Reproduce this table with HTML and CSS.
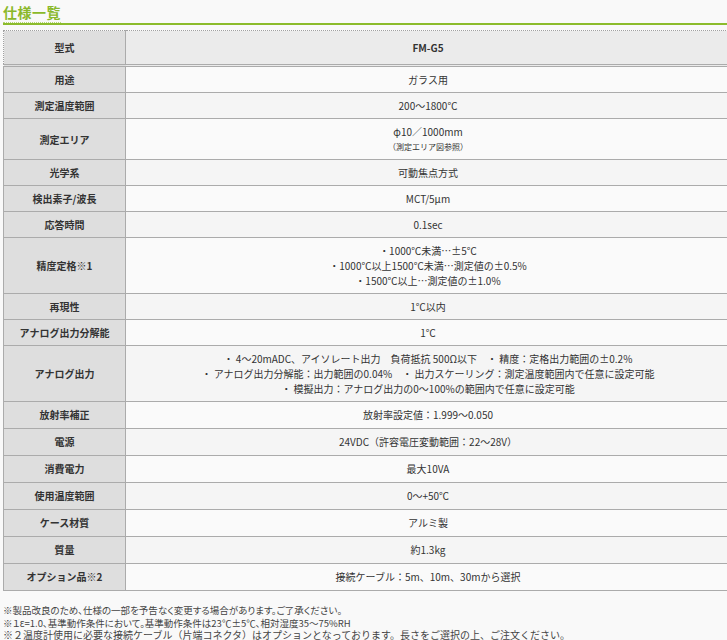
FILE: index.html
```html
<!DOCTYPE html>
<html lang="ja">
<head>
<meta charset="utf-8">
<link rel="stylesheet" href="styles.css">
</head>
<body>
<div class="page">
  <h2 class="heading"><span class="heading-text">仕様一覧</span></h2>
  <table class="spec">
    <thead>
      <tr><th class="label">型式</th><th class="model">FM-G5</th></tr>
    </thead>
    <tbody>
      <tr><th class="label">用途</th><td>ガラス用</td></tr>
      <tr><th class="label">測定温度範囲</th><td>200～1800℃</td></tr>
      <tr><th class="label">測定エリア</th><td>φ10／1000mm<span class="small">（測定エリア図参照）</span></td></tr>
      <tr><th class="label">光学系</th><td>可動焦点方式</td></tr>
      <tr><th class="label">検出素子/波長</th><td>MCT/5μm</td></tr>
      <tr><th class="label">応答時間</th><td>0.1sec</td></tr>
      <tr><th class="label">精度定格※1</th><td>・1000℃未満…±5℃<br>・1000℃以上1500℃未満…測定値の±0.5%<br>・1500℃以上…測定値の±1.0%</td></tr>
      <tr><th class="label">再現性</th><td>1℃以内</td></tr>
      <tr><th class="label">アナログ出力分解能</th><td>1℃</td></tr>
      <tr><th class="label">アナログ出力</th><td>・ 4～20mADC、アイソレート出力　負荷抵抗 500Ω以下　・ 精度：定格出力範囲の±0.2%<br>・ アナログ出力分解能：出力範囲の0.04%　・ 出力スケーリング：測定温度範囲内で任意に設定可能<br>・ 模擬出力：アナログ出力の0～100%の範囲内で任意に設定可能</td></tr>
      <tr><th class="label">放射率補正</th><td>放射率設定値：1.999～0.050</td></tr>
      <tr><th class="label">電源</th><td>24VDC（許容電圧変動範囲：22～28V）</td></tr>
      <tr><th class="label">消費電力</th><td>最大10VA</td></tr>
      <tr><th class="label">使用温度範囲</th><td>0～+50℃</td></tr>
      <tr><th class="label">ケース材質</th><td>アルミ製</td></tr>
      <tr><th class="label">質量</th><td>約1.3kg</td></tr>
      <tr><th class="label">オプション品※2</th><td>接続ケーブル：5m、10m、30mから選択</td></tr>
    </tbody>
  </table>
  <div class="notes">
    <p class="note-narrow">※製品改良のため、仕様の一部を予告なく変更する場合があります。ご了承ください。</p>
    <p class="note-narrow">※１ε=1.0、基準動作条件において。基準動作条件は23℃±5℃、相対湿度35～75%RH</p>
    <p class="note-wide">※２温度計使用に必要な接続ケーブル（片端コネクタ）はオプションとなっております。長さをご選択の上、ご注文ください。</p>
  </div>
</div>
</body>
</html>
```

FILE: styles.css
```css
html, body {
  margin: 0;
  padding: 0;
  background: #f9f9f9;
}
body {
  font-family: "Noto Sans CJK JP", "Noto Sans", sans-serif;
  color: #333;
  overflow: hidden;
}
.page {
  padding: 0 0 0 3px;
  width: 727px;
}
.heading {
  margin: 0;
  padding-top: 3px;
  font-size: 14px;
  line-height: 18px;
  font-weight: bold;
  color: #8ab82a;
  border-bottom: 2px solid #8cbc2c;
}
.heading-text {
  display: inline-block;
  border-bottom: 1px dotted #b6d47a;
  padding-bottom: 1px;
  letter-spacing: 0.5px;
}
.spec {
  margin-top: 5px;
  width: 727px;
  border-collapse: collapse;
  font-size: 10px;
  line-height: 15px;
}
.spec th, .spec td {
  border-top: 1px solid #ababab;
  border-bottom: 1px solid #ababab;
  padding: 5px 4px;
  height: 15px;
  text-align: center;
}
.spec tbody tr:nth-child(n+11) th,
.spec tbody tr:nth-child(n+11) td {
  padding-bottom: 6px;
}
.spec .label {
  width: 113px;
  background: #dedede;
  font-weight: bold;
  border-left: 1px solid #ababab;
  border-right: 1px solid #ababab;
  color: #333;
}
.spec td {
  background: #fafafa;
  font-weight: normal;
}
.spec tbody tr:nth-child(even) td {
  background-color: #f4f4f4;
  background-image: repeating-conic-gradient(#efefef 0 25%, #fafafa 0 50%);
  background-size: 2px 2px;
}
.spec thead th {
  padding: 9px 4px;
  border-top: 1px dotted #a0a0a0;
  border-bottom: 3px double #ababab;
}
.spec thead .label {
  border-left: 1px dotted #a0a0a0;
}
.spec .model {
  background: #ebebeb;
  font-weight: bold;
}
.small {
  display: block;
  font-size: 8px;
  line-height: 15px;
}
.notes {
  margin-top: 13px;
  color: #444;
}
.notes p {
  margin: 0;
  line-height: 12.5px;
  height: 12.5px;
}
.note-narrow {
  font-size: 9.5px;
  font-feature-settings: "palt";
}
.note-wide {
  font-size: 10px;
}
```
